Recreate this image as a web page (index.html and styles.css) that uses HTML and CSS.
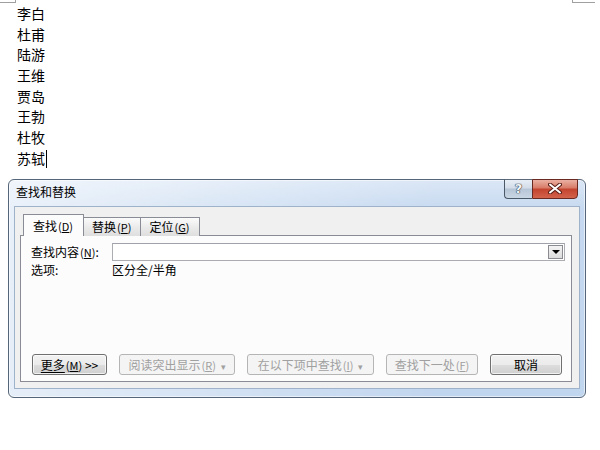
FILE: index.html
```html
<!DOCTYPE html>
<html>
<head>
    <meta charset="utf-8">
    <title>查找和替换</title>
    <link rel="stylesheet" href="styles.css">
</head>
<body>
    <div class="marks">
        <span class="mark mark-left"></span>
        <span class="mark mark-right"></span>
    </div>

    <div class="doc">
        <p>李白</p>
        <p>杜甫</p>
        <p>陆游</p>
        <p>王维</p>
        <p>贾岛</p>
        <p>王勃</p>
        <p>杜牧</p>
        <p>苏轼<span class="caret"></span></p>
    </div>

    <div class="dialog">
        <div class="titlebar">
            <span class="title">查找和替换</span>
            <div class="caption-buttons">
                <span class="cap-btn help">?</span>
                <span class="cap-btn close">
                    <svg width="14" height="11" viewBox="0 0 14 11">
                        <path d="M2 1.5 L12 9.5 M12 1.5 L2 9.5" stroke="#5a2018" stroke-width="4" stroke-linecap="round"/>
                        <path d="M2 1.5 L12 9.5 M12 1.5 L2 9.5" stroke="#ffffff" stroke-width="2" stroke-linecap="round"/>
                    </svg>
                </span>
            </div>
        </div>

        <div class="client">
            <div class="tabs">
                <span class="tab active">查找<span class="key">(<u>D</u>)</span></span>
                <span class="tab">替换<span class="key">(<u>P</u>)</span></span>
                <span class="tab">定位<span class="key">(<u>G</u>)</span></span>
            </div>

            <div class="panel">
                <div class="row">
                    <label class="field-label">查找内容<span class="key">(<u>N</u>)</span>:</label>
                    <div class="combo">
                        <span class="combo-arrow"></span>
                    </div>
                </div>
                <div class="row options">
                    <span class="field-label">选项:</span>
                    <span>区分全/半角</span>
                </div>

                <div class="actions">
                    <button class="btn btn-more"><span class="under">更多</span><span class="key">(<u>M</u>)</span> &gt;&gt;</button>
                    <button class="btn btn-reading" disabled>阅读突出显示<span class="key">(<u>R</u>)</span> <span class="drop">▾</span></button>
                    <button class="btn btn-within" disabled>在以下项中查找<span class="key">(<u>I</u>)</span> <span class="drop">▾</span></button>
                    <button class="btn btn-next" disabled>查找下一处<span class="key">(<u>F</u>)</span></button>
                    <button class="btn btn-cancel">取消</button>
                </div>
            </div>
        </div>
    </div>
</body>
</html>
```

FILE: styles.css
```css
body {
    margin: 0;
    background: #ffffff;
    font-family: "Noto Sans CJK SC", "Liberation Sans", sans-serif;
    color: #000000;
    width: 600px;
    height: 450px;
    overflow: hidden;
}

/* page corner marks of the document */
.marks {
    display: flex;
    height: 3px;
}
.mark {
    display: block;
    height: 2px;
    border-bottom: 1px solid #a0a0a0;
}
.mark-left {
    width: 15px;
    border-right: 1px solid #a0a0a0;
}
.mark-right {
    width: 22px;
    margin-left: auto;
    margin-right: 5px;
    border-left: 1px solid #a0a0a0;
}

.doc {
    padding: 0 0 0 17px;
    font-size: 14px;
}
.doc p {
    margin: 0;
    line-height: 20.7px;
    height: 20.7px;
}
.caret {
    display: inline-block;
    width: 1px;
    height: 18px;
    background: #000000;
    vertical-align: -4px;
    margin-left: 1px;
}

/* dialog window */
.dialog {
    margin: 10px 0 0 8px;
    width: 578px;
    height: 219px;
    box-sizing: border-box;
    border: 1px solid #56667a;
    border-radius: 6px;
    background:
        linear-gradient(90deg, rgba(255, 255, 255, 0.6), rgba(255, 255, 255, 0) 75%),
        linear-gradient(#dbe7f6, #c6d9f0 30px, #c0d5ee);
    box-shadow: inset 0 0 0 1px rgba(255, 255, 255, 0.55);
    display: flex;
    flex-direction: column;
    font-size: 12px;
}
.titlebar {
    height: 26px;
    display: flex;
    align-items: flex-start;
}
.title {
    margin: 4px 0 0 7px;
    line-height: 16px;
}
.caption-buttons {
    display: flex;
    margin: -1px 7px 0 auto;
}
.cap-btn {
    height: 18px;
    display: flex;
    align-items: center;
    justify-content: center;
    border: 1px solid #4b5868;
    border-top-color: #5c6a7c;
}
.help {
    width: 27px;
    border-right: none;
    border-radius: 0 0 0 4px;
    background: linear-gradient(#e8eef5, #d2dce8 45%, #b6c5d6 50%, #c9d6e4);
    color: #f4f6f8;
    font-family: "DejaVu Sans", sans-serif;
    font-weight: bold;
    font-size: 13px;
    text-shadow: 0 0 1px #2e3a48, 0 0 1px #2e3a48, 0 0 1px #2e3a48;
}
.close {
    width: 44px;
    border-radius: 0 0 4px 0;
    border-color: #6a2a22;
    background: linear-gradient(#eab0a2, #d87a66 45%, #c3432e 50%, #d3634b);
}

.client {
    flex: 1;
    margin: 0 5px 8px 5px;
    border: 1px solid #9eb2c9;
    background: #f0f0f0;
    padding: 7px 7px 6px 5px;
    display: flex;
    flex-direction: column;
}

/* tabs */
.tabs {
    display: flex;
    align-items: flex-end;
    padding-left: 3px;
    margin-bottom: -1px;
    position: relative;
    z-index: 1;
}
.tab {
    height: 18px;
    line-height: 18px;
    padding: 0 9px 0 8px;
    border: 1px solid #898c95;
    border-bottom: none;
    border-left: none;
    background: linear-gradient(#fbfbfb, #ebebeb 50%, #dedede);
}
.tab.active {
    height: 21px;
    line-height: 21px;
    border-left: 1px solid #898c95;
    padding: 0 10px 0 9px;
    background: #fcfcfc;
}
.key {
    font-size: 11px;
    margin-left: 1px;
}
.key u {
    text-underline-offset: 1px;
}

.panel {
    flex: 1;
    border: 1px solid #898c95;
    background: #fcfcfc;
    padding: 7px 6px 6px 10px;
    display: flex;
    flex-direction: column;
}
.row {
    display: flex;
    align-items: center;
}
.field-label {
    width: 81px;
    flex: none;
}
.combo {
    flex: 1;
    height: 18px;
    box-sizing: border-box;
    border: 1px solid #abadb3;
    border-top-color: #a0a2a9;
    background: #ffffff;
    display: flex;
    justify-content: flex-end;
    padding: 1px;
}
.combo-arrow {
    width: 15px;
    box-sizing: border-box;
    border: 1px solid #8a8c92;
    background: linear-gradient(#f4f4f4, #dcdcdc);
    display: flex;
    align-items: center;
    justify-content: center;
}
.combo-arrow::after {
    content: "";
    border-left: 4px solid transparent;
    border-right: 4px solid transparent;
    border-top: 4px solid #000000;
    margin-top: 1px;
}
.options {
    margin-top: 1px;
    line-height: 16px;
}

/* bottom buttons */
.actions {
    margin-top: auto;
    display: flex;
    gap: 12px;
    padding-left: 1px;
}
.btn {
    height: 21px;
    padding: 0;
    font: inherit;
    font-size: 12px;
    color: #000000;
    border: 1px solid #707070;
    border-radius: 3px;
    background: linear-gradient(#f2f2f2, #ebebeb 50%, #dddddd 51%, #cfcfcf);
    box-shadow: inset 0 0 0 1px rgba(255, 255, 255, 0.7);
}
.btn:disabled {
    color: #a0a0a0;
    border-color: #b5b5b5;
    background: #f4f4f4;
    box-shadow: none;
}
.btn-more { width: 75px; }
.btn-reading { width: 116px; }
.btn-within { width: 127px; }
.btn-next { width: 92px; }
.btn-cancel { width: 72px; }
.under {
    text-decoration: underline;
    text-underline-offset: 2px;
}
.drop {
    font-size: 9px;
    margin-left: 2px;
}
```
